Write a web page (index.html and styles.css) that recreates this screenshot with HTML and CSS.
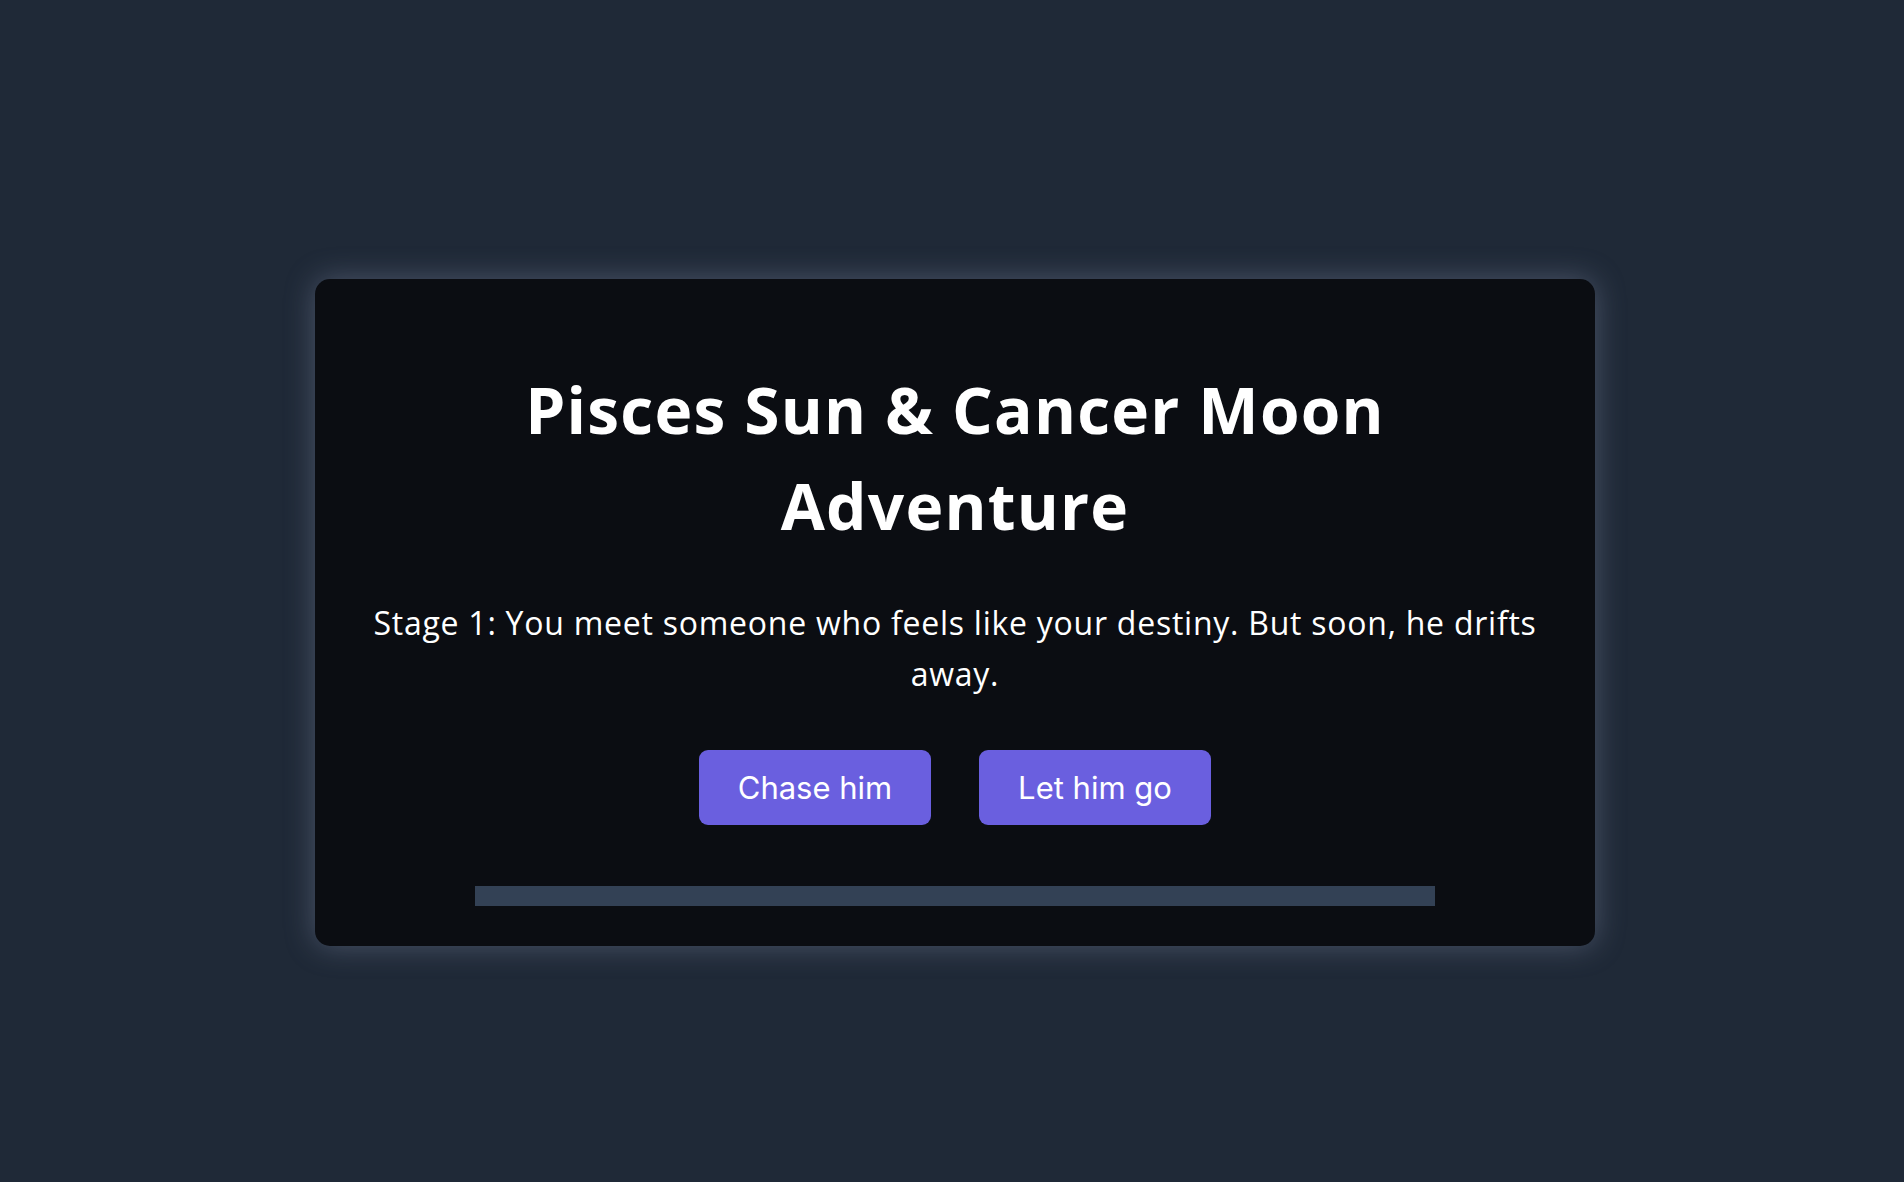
FILE: index.html
```html
<!DOCTYPE html>
<html lang="en">
<head>
<meta charset="utf-8">
<title>Pisces Sun &amp; Cancer Moon Adventure</title>
<link rel="stylesheet" href="styles.css">
</head>
<body>
  <main class="card">
    <h1 class="title">Pisces Sun &amp; Cancer Moon Adventure</h1>
    <p class="story">Stage 1: You meet someone who feels like your destiny. But soon, he drifts away.</p>
    <div class="choices">
      <button class="choice">Chase him</button>
      <button class="choice">Let him go</button>
    </div>
    <div class="progress"><div class="progress-fill" style="width: 0%"></div></div>
  </main>
</body>
</html>
```
FILE: styles.css
```css
html, body {
  margin: 0;
  padding: 0;
}
body {
  box-sizing: border-box;
  min-height: 100vh;
  background: #1f2937;
  display: flex;
  align-items: center;
  justify-content: center;
  padding: 42px 0 0 6px;
  font-family: "Open Sans", "Noto Sans", sans-serif;
  color: #ffffff;
}
.card {
  box-sizing: border-box;
  width: 1280px;
  background: #0b0d12;
  border-radius: 15px;
  padding: 40px;
  text-align: center;
  box-shadow: 0 0 30px rgba(160, 170, 200, 0.35);
}
.title {
  font-family: "Open Sans", sans-serif;
  font-weight: 700;
  font-size: 64px;
  line-height: 96px;
  margin: 43px 0;
  letter-spacing: 1.2px;
}
.story {
  font-family: "Open Sans", sans-serif;
  font-weight: 400;
  font-size: 32px;
  line-height: 51px;
  margin: 0 0 51px;
  letter-spacing: 0.75px;
}
.choices {
  display: flex;
  justify-content: center;
  gap: 48px;
}
.choice {
  box-sizing: border-box;
  width: 232px;
  height: 75px;
  border: none;
  border-radius: 9px;
  background: #6a5fdf;
  color: #ffffff;
  font-family: "Inter", sans-serif;
  font-size: 31px;
  cursor: pointer;
}
.progress {
  width: 960px;
  height: 20px;
  margin: 61px auto 0;
  background: #334155;
}
.progress-fill {
  height: 100%;
  background: #6a5fdf;
}
```
